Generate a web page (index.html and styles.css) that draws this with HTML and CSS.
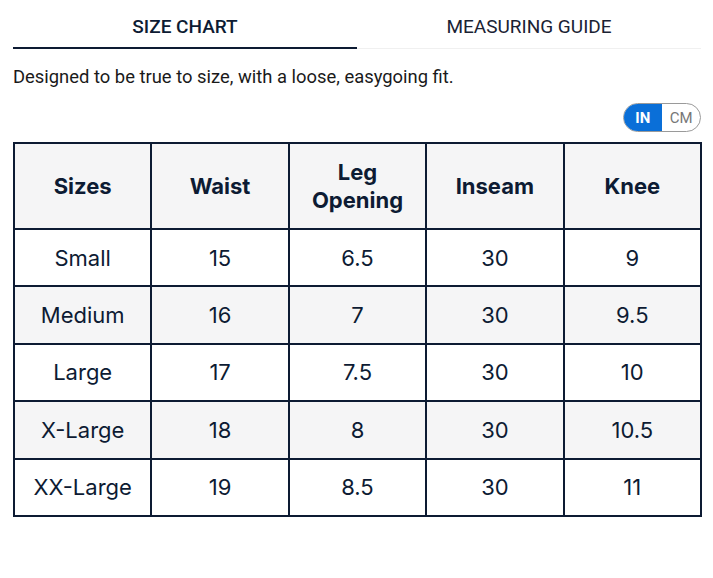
FILE: index.html
```html
<!DOCTYPE html>
<html>
<head>
<meta charset="utf-8">
<link rel="stylesheet" href="styles.css">
</head>
<body>
<div class="page">
  <div class="tabs">
    <div class="tab active">SIZE CHART</div>
    <div class="tab">MEASURING GUIDE</div>
  </div>
  <p class="desc">Designed to be true to size, with a loose, easygoing fit.</p>
  <div class="toggle-row">
    <div class="toggle">
      <span class="opt on">IN</span><span class="opt">CM</span>
    </div>
  </div>
  <table class="chart">
    <thead>
      <tr><th>Sizes</th><th>Waist</th><th>Leg<br>Opening</th><th>Inseam</th><th>Knee</th></tr>
    </thead>
    <tbody>
      <tr><td>Small</td><td>15</td><td>6.5</td><td>30</td><td>9</td></tr>
      <tr class="alt"><td>Medium</td><td>16</td><td>7</td><td>30</td><td>9.5</td></tr>
      <tr><td>Large</td><td>17</td><td>7.5</td><td>30</td><td>10</td></tr>
      <tr class="alt"><td>X-Large</td><td>18</td><td>8</td><td>30</td><td>10.5</td></tr>
      <tr><td>XX-Large</td><td>19</td><td>8.5</td><td>30</td><td>11</td></tr>
    </tbody>
  </table>
</div>
</body>
</html>
```

FILE: styles.css
```css
* { box-sizing: border-box; }
html, body { margin: 0; padding: 0; background: #fff; }
body { color: #0d1b33; font-family: Inter, "Noto Sans", sans-serif; }
.page { padding: 0 12px 0 13px; }
.tabs { display: flex; height: 49px; }
.tab {
  flex: 0 0 344px;
  display: flex; align-items: center; justify-content: center;
  font-family: "Roboto", sans-serif;
  font-size: 19px; letter-spacing: 0;
  color: #1a2233;
  border-bottom: 1px solid #f0f0f0;
  padding-top: 5px;
}
.tab + .tab { flex: 1 1 auto; }
.tab.active {
  font-weight: 500;
  color: #0d1b33;
  border-bottom: 2px solid #0d1b33;
  height: 49px;
}
.desc {
  margin: 16px 0 0;
  font-family: "Roboto", sans-serif;
  font-size: 18.4px; color: #1a1a1a;
  line-height: 24px;
}
.toggle-row { display: flex; justify-content: flex-end; margin-top: 14px; }
.toggle {
  display: flex; height: 29px; width: 78px;
  border: 1px solid #9a9a9a; border-radius: 15px; overflow: hidden;
  font-family: "Roboto", sans-serif; font-size: 15px;
}
.opt { display: flex; align-items: center; justify-content: center; width: 38px; color: #777; }
.opt.on { width: 40px; background: #0a6fd8; color: #fff; font-weight: 700; margin: -1px 0 -1px -1px; }
.chart {
  margin-top: 10px;
  width: 689px;
  border-collapse: collapse;
  table-layout: fixed;
  font-size: 22px;
}
.chart th, .chart td {
  border: 2px solid #0d1b33;
  text-align: center;
  width: 20%;
}
.chart th {
  height: 86px; background: #f5f5f6; font-weight: 700; line-height: 28px; font-size: 22px;
}
.chart td { height: 57.4px; font-weight: 400; }
.chart tr.alt td { background: #f5f5f6; }
```
